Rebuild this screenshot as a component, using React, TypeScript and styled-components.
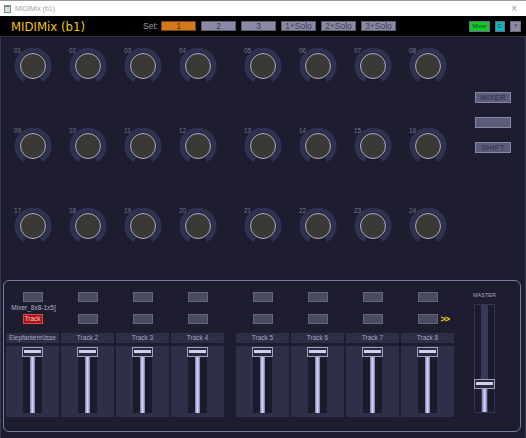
import * as React from "react"
import styled, { createGlobalStyle } from "styled-components"

const setNames = ["1", "2", "3", "1+Solo", "2+Solo", "3+Solo"]
const trackNames = [
  "Elepfantenrüsse",
  "Track 2",
  "Track 3",
  "Track 4",
  "Track 5",
  "Track 6",
  "Track 7",
  "Track 8",
]

// knob numbers per bank, row by row
const banks = [
  [1, 2, 3, 4, 9, 10, 11, 12, 17, 18, 19, 20],
  [5, 6, 7, 8, 13, 14, 15, 16, 21, 22, 23, 24],
]

const ringPath = "M 11 32.86 A 16 16 0 1 1 27 32.86"

const Knob = ({ n }: { n: number }) => (
  <KnobCell>
    <KnobLabel>{String(n).padStart(2, "0")}</KnobLabel>
    <KnobSvg width="38" height="38" viewBox="0 0 38 38">
      <path d={ringPath} stroke="#2f3150" strokeWidth="5" fill="none" />
      <circle cx="19" cy="19" r="12.5" fill="#3a3936" stroke="#b2b2c6" strokeWidth="1" />
    </KnobSvg>
  </KnobCell>
)

const Fader = ({ value, height, master }: { value: number; height: number; master?: boolean }) => {
  const capTop = Math.round((1 - value) * (height - 10))
  return (
    <Slot $h={height} $master={master}>
      {master && <Stripe />}
      <Rail style={{ top: capTop + 5 }} />
      <Cap style={{ top: capTop }} />
    </Slot>
  )
}

const Strip = ({ name, idx }: { name: string; idx: number }) => (
  <StripCol>
    <PadRow>
      <Pad />
    </PadRow>
    <InfoRow>{idx === 0 ? "Mixer_8x8-1x5]" : ""}</InfoRow>
    <SelRow>
      <span />
      <Pad $red={idx === 0}>{idx === 0 ? "Track" : ""}</Pad>
      <Chevron>{idx === 7 ? ">>" : ""}</Chevron>
    </SelRow>
    <NameLabel>{name}</NameLabel>
    <FaderBox>
      <Fader value={1} height={66} />
    </FaderBox>
  </StripCol>
)

const App = () => (
  <Window>
    <GlobalStyle />
    <TitleBar>
      <AppIcon />
      <TitleText>MIDIMix (b1)</TitleText>
      <Close>×</Close>
    </TitleBar>

    <Header>
      <Title>MIDIMix (b1)</Title>
      <SetLabel>Set:</SetLabel>
      <SetGroup>
        {setNames.map((s, i) => (
          <SetButton key={s} $active={i === 0}>
            {s}
          </SetButton>
        ))}
      </SetGroup>
      <Spacer />
      <ModeButton $bg="#14c82a" $fg="#0a4a12" $w={21}>
        Mixer
      </ModeButton>
      <ModeButton $bg="#0fb5bd" $fg="#0b3c44" $w={10}>
        C
      </ModeButton>
      <ModeButton $bg="#8a8aa6" $fg="#3c3c54" $w={11}>
        ?
      </ModeButton>
    </Header>

    <Body>
      <KnobArea>
        <BankRow>
          {banks.map((b, i) => (
            <Bank key={i} $rowGap={42}>
              {b.map((n) => (
                <Knob key={n} n={n} />
              ))}
            </Bank>
          ))}
        </BankRow>
        <SideCol>
          <SideButton>MIXER</SideButton>
          <SideButton />
          <SideButton>SHIFT</SideButton>
        </SideCol>
      </KnobArea>

      <Panel>
        <BankRow>
          {[0, 1].map((b) => (
            <Bank key={b} $rowGap={0}>
              {trackNames.slice(b * 4, b * 4 + 4).map((t, i) => (
                <Strip key={t} name={t} idx={b * 4 + i} />
              ))}
            </Bank>
          ))}
        </BankRow>
        <MasterCol>
          <MasterLabel>MASTER</MasterLabel>
          <Fader value={0.25} height={109} master />
        </MasterCol>
      </Panel>
    </Body>
  </Window>
)

export default App

// Styles
const GlobalStyle = createGlobalStyle`
  html, body {
    margin: 0;
    padding: 0;
    background: #1d1d2f;
  }
  body {
    font-family: "Liberation Sans", Arial, sans-serif;
  }
`

const Window = styled.div`
  width: 526px;
  height: 438px;
  display: flex;
  flex-direction: column;
  overflow: hidden;
`

const TitleBar = styled.div`
  height: 15px;
  flex: 0 0 auto;
  background: #fff;
  border-top: 1px solid #9a9a9a;
  display: flex;
  align-items: center;
  padding: 0 9px 0 4px;
`

const AppIcon = styled.div`
  width: 5px;
  height: 5px;
  border: 1px solid #7a8a8a;
  border-top-width: 2px;
  background: #cfe0dc;
  margin-right: 4px;
`

const TitleText = styled.span`
  font-size: 7px;
  color: #a4a4a4;
`

const Close = styled.span`
  margin-left: auto;
  font-size: 10px;
  color: #9a9a9a;
`

const Header = styled.div`
  height: 20px;
  flex: 0 0 auto;
  background: #000;
  display: flex;
  align-items: center;
  padding: 0 5px 0 11px;
  gap: 4px;
`

const Title = styled.div`
  width: 128px;
  font-family: "Liberation Sans Narrow", "DejaVu Sans Condensed", sans-serif;
  font-size: 13px;
  color: #f0c419;
  white-space: nowrap;
`

const SetLabel = styled.span`
  width: 14px;
  font-size: 8.5px;
  color: #9a9aae;
`

const SetGroup = styled.div`
  display: flex;
  gap: 5px;
`

const SetButton = styled.div<{ $active?: boolean }>`
  width: 35px;
  height: 10px;
  box-sizing: border-box;
  border: 1px solid ${(p) => (p.$active ? "#7a4410" : "#5a5a70")};
  background: ${(p) => (p.$active ? "#d27a1a" : "#8a8aa6")};
  color: ${(p) => (p.$active ? "#5a2e00" : "#3c3c54")};
  font-size: 8.5px;
  line-height: 8px;
  text-align: center;
`

const Spacer = styled.div`
  flex: 1;
`

const ModeButton = styled.div<{ $bg: string; $fg: string; $w: number }>`
  width: ${(p) => p.$w}px;
  height: 11px;
  box-sizing: border-box;
  border: 1px solid #6a6a80;
  background: ${(p) => p.$bg};
  color: ${(p) => p.$fg};
  font-size: 6px;
  line-height: 9px;
  text-align: center;
  margin-left: 1px;
`

const Body = styled.div`
  flex: 1;
  background: #1d1d2f;
  border-top: 1px solid #2c2c42;
  border-left: 1px solid #3a3a4e;
  border-right: 1px solid #3a3a4e;
  display: flex;
  flex-direction: column;
`

const KnobArea = styled.div`
  display: flex;
  padding: 10px 0 0 5px;
`

const BankRow = styled.div`
  display: flex;
  gap: 12px;
`

const Bank = styled.div<{ $rowGap: number }>`
  display: grid;
  grid-template-columns: repeat(4, 53px);
  column-gap: 2px;
  row-gap: ${(p) => p.$rowGap}px;
`

const KnobCell = styled.div`
  display: flex;
  flex-direction: column;
  align-items: center;
`

const KnobLabel = styled.span`
  align-self: flex-start;
  margin-left: 8px;
  height: 7px;
  font-size: 6.5px;
  line-height: 7px;
  color: #76769a;
`

const KnobSvg = styled.svg`
  display: block;
  margin-top: -7px;
`

const SideCol = styled.div`
  display: flex;
  flex-direction: column;
  gap: 14px;
  margin: 45px 0 0 21px;
`

const SideButton = styled.div`
  width: 36px;
  height: 11px;
  box-sizing: border-box;
  border: 1px solid #8686a6;
  background: #5c5c7a;
  color: #2a2a3e;
  font-size: 7.5px;
  line-height: 9px;
  text-align: center;
  letter-spacing: 0.3px;
`

const Panel = styled.div`
  margin: 35px 4px 0 2px;
  border: 1px solid #7a7aa0;
  border-radius: 6px;
  padding: 11px 0 14px 2px;
  display: flex;
`

const StripCol = styled.div`
  display: flex;
  flex-direction: column;
`

const PadRow = styled.div`
  height: 10px;
  display: flex;
  justify-content: center;
`

const Pad = styled.div<{ $red?: boolean }>`
  width: 20px;
  height: 10px;
  box-sizing: border-box;
  border: 1px solid ${(p) => (p.$red ? "#e04848" : "#66667c")};
  background: ${(p) => (p.$red ? "#a8141c" : "#4a4a60")};
  color: #f2c8c8;
  font-size: 6.5px;
  line-height: 8px;
  text-align: center;
`

const InfoRow = styled.div`
  height: 12px;
  font-size: 6.5px;
  line-height: 11px;
  color: #b4b4cc;
  text-align: center;
  padding-left: 2px;
  white-space: nowrap;
`

const SelRow = styled.div`
  height: 10px;
  display: grid;
  grid-template-columns: 1fr 20px 1fr;
  align-items: center;
`

const Chevron = styled.span`
  padding-left: 3px;
  font-size: 9px;
  font-weight: bold;
  letter-spacing: -1px;
  color: #f0d010;
`

const NameLabel = styled.div`
  margin-top: 9px;
  height: 10px;
  background: #2e2e46;
  color: #a8a8c2;
  font-size: 6.5px;
  line-height: 10px;
  text-align: center;
  white-space: nowrap;
  overflow: hidden;
`

const FaderBox = styled.div`
  margin-top: 3px;
  height: 71px;
  box-sizing: border-box;
  padding: 1px 0 4px;
  background: #2f2f48;
  display: flex;
  justify-content: center;
`

const Slot = styled.div<{ $h: number; $master?: boolean }>`
  position: relative;
  width: ${(p) => (p.$master ? 21 : 19)}px;
  height: ${(p) => p.$h}px;
  box-sizing: border-box;
  background: #1b1b2c;
  border: ${(p) => (p.$master ? "1px solid #34344c" : "none")};
`

const Stripe = styled.div`
  position: absolute;
  top: 0;
  bottom: 0;
  left: 6px;
  width: 7px;
  background: #3a3a56;
`

const Rail = styled.div`
  position: absolute;
  bottom: 0;
  left: 50%;
  width: 5px;
  margin-left: -2.5px;
  background: linear-gradient(90deg, #7878b0, #d6d6f6 50%, #7878b0);
`

const Cap = styled.div`
  position: absolute;
  left: -1px;
  right: -1px;
  height: 10px;
  box-sizing: border-box;
  border: 1px solid #a2a2b2;
  background: #2a2a3c;

  &::after {
    content: "";
    position: absolute;
    left: 1px;
    right: 1px;
    top: 2px;
    height: 3px;
    background: #cfcff0;
  }
`

const MasterCol = styled.div`
  margin-left: 19px;
  display: flex;
  flex-direction: column;
  align-items: center;
  gap: 6px;
`

const MasterLabel = styled.span`
  font-size: 5.5px;
  line-height: 6px;
  color: #a4a4bc;
`
